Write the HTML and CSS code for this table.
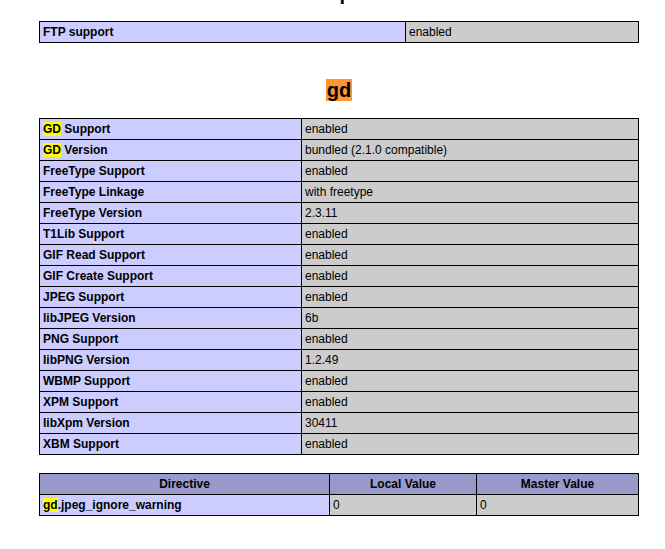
FILE: index.html
```html
<!DOCTYPE html>
<html>
<head>
<meta charset="utf-8">
<title>phpinfo()</title>
<link rel="stylesheet" href="styles.css">
</head>
<body>
<div class="center">
<h2>ftp</h2>
<table class="t-ftp">
<tr><td class="e c-ftp">FTP support</td><td class="v">enabled</td></tr>
</table>
<br>
<h2 class="mod"><span class="cur">gd</span></h2>
<table class="t-gd">
<tr><td class="e c-gd"><mark class="hl">GD</mark> Support</td><td class="v">enabled</td></tr>
<tr><td class="e"><mark class="hl">GD</mark> Version</td><td class="v">bundled (2.1.0 compatible)</td></tr>
<tr><td class="e">FreeType Support</td><td class="v">enabled</td></tr>
<tr><td class="e">FreeType Linkage</td><td class="v">with freetype</td></tr>
<tr><td class="e">FreeType Version</td><td class="v">2.3.11</td></tr>
<tr><td class="e">T1Lib Support</td><td class="v">enabled</td></tr>
<tr><td class="e">GIF Read Support</td><td class="v">enabled</td></tr>
<tr><td class="e">GIF Create Support</td><td class="v">enabled</td></tr>
<tr><td class="e">JPEG Support</td><td class="v">enabled</td></tr>
<tr><td class="e">libJPEG Version</td><td class="v">6b</td></tr>
<tr><td class="e">PNG Support</td><td class="v">enabled</td></tr>
<tr><td class="e">libPNG Version</td><td class="v">1.2.49</td></tr>
<tr><td class="e">WBMP Support</td><td class="v">enabled</td></tr>
<tr><td class="e">XPM Support</td><td class="v">enabled</td></tr>
<tr><td class="e">libXpm Version</td><td class="v">30411</td></tr>
<tr><td class="e">XBM Support</td><td class="v">enabled</td></tr>
</table>
<br>
<table class="t-dir">
<tr class="h"><th class="c-dir1">Directive</th><th class="c-dir2">Local Value</th><th>Master Value</th></tr>
<tr><td class="e"><mark class="hl">gd</mark>.jpeg_ignore_warning</td><td class="v">0</td><td class="v">0</td></tr>
</table>
</div>
</body>
</html>
```

FILE: styles.css
```css
html, body {
  margin: 0;
  padding: 0;
  background: #ffffff;
  color: #000000;
  font-family: "Liberation Sans", Arial, sans-serif;
  font-size: 16px;
}

.center {
  display: flow-root;
  width: 600px;
  margin-top: -35px;
  margin-left: 39px;
  text-align: center;
}

h2 {
  font-size: 20px;
  font-weight: bold;
  margin: 16.6px 0;
  line-height: 23px;
}

h2.mod {
  margin-top: 17.6px;
}

table {
  border-collapse: collapse;
  width: 600px;
  table-layout: fixed;
  text-align: left;
}

td, th {
  border: 1px solid #000000;
  font-size: 12px;
  line-height: 14px;
  padding: 3px;
  vertical-align: baseline;
}

th {
  text-align: center;
}

.e {
  background-color: #ccccff;
  font-weight: bold;
  color: #000000;
}

.h th {
  background-color: #9999cc;
  font-weight: bold;
  color: #000000;
}

.v {
  background-color: #cccccc;
  color: #000000;
}

.c-ftp { width: 359px; }
.c-gd { width: 255px; }
.c-dir1 { width: 283px; }
.c-dir2 { width: 140px; }

.hl {
  background: #ffff00;
  color: #000000;
}

.cur {
  background: #ff9632;
  padding: 0 1px;
}
```
